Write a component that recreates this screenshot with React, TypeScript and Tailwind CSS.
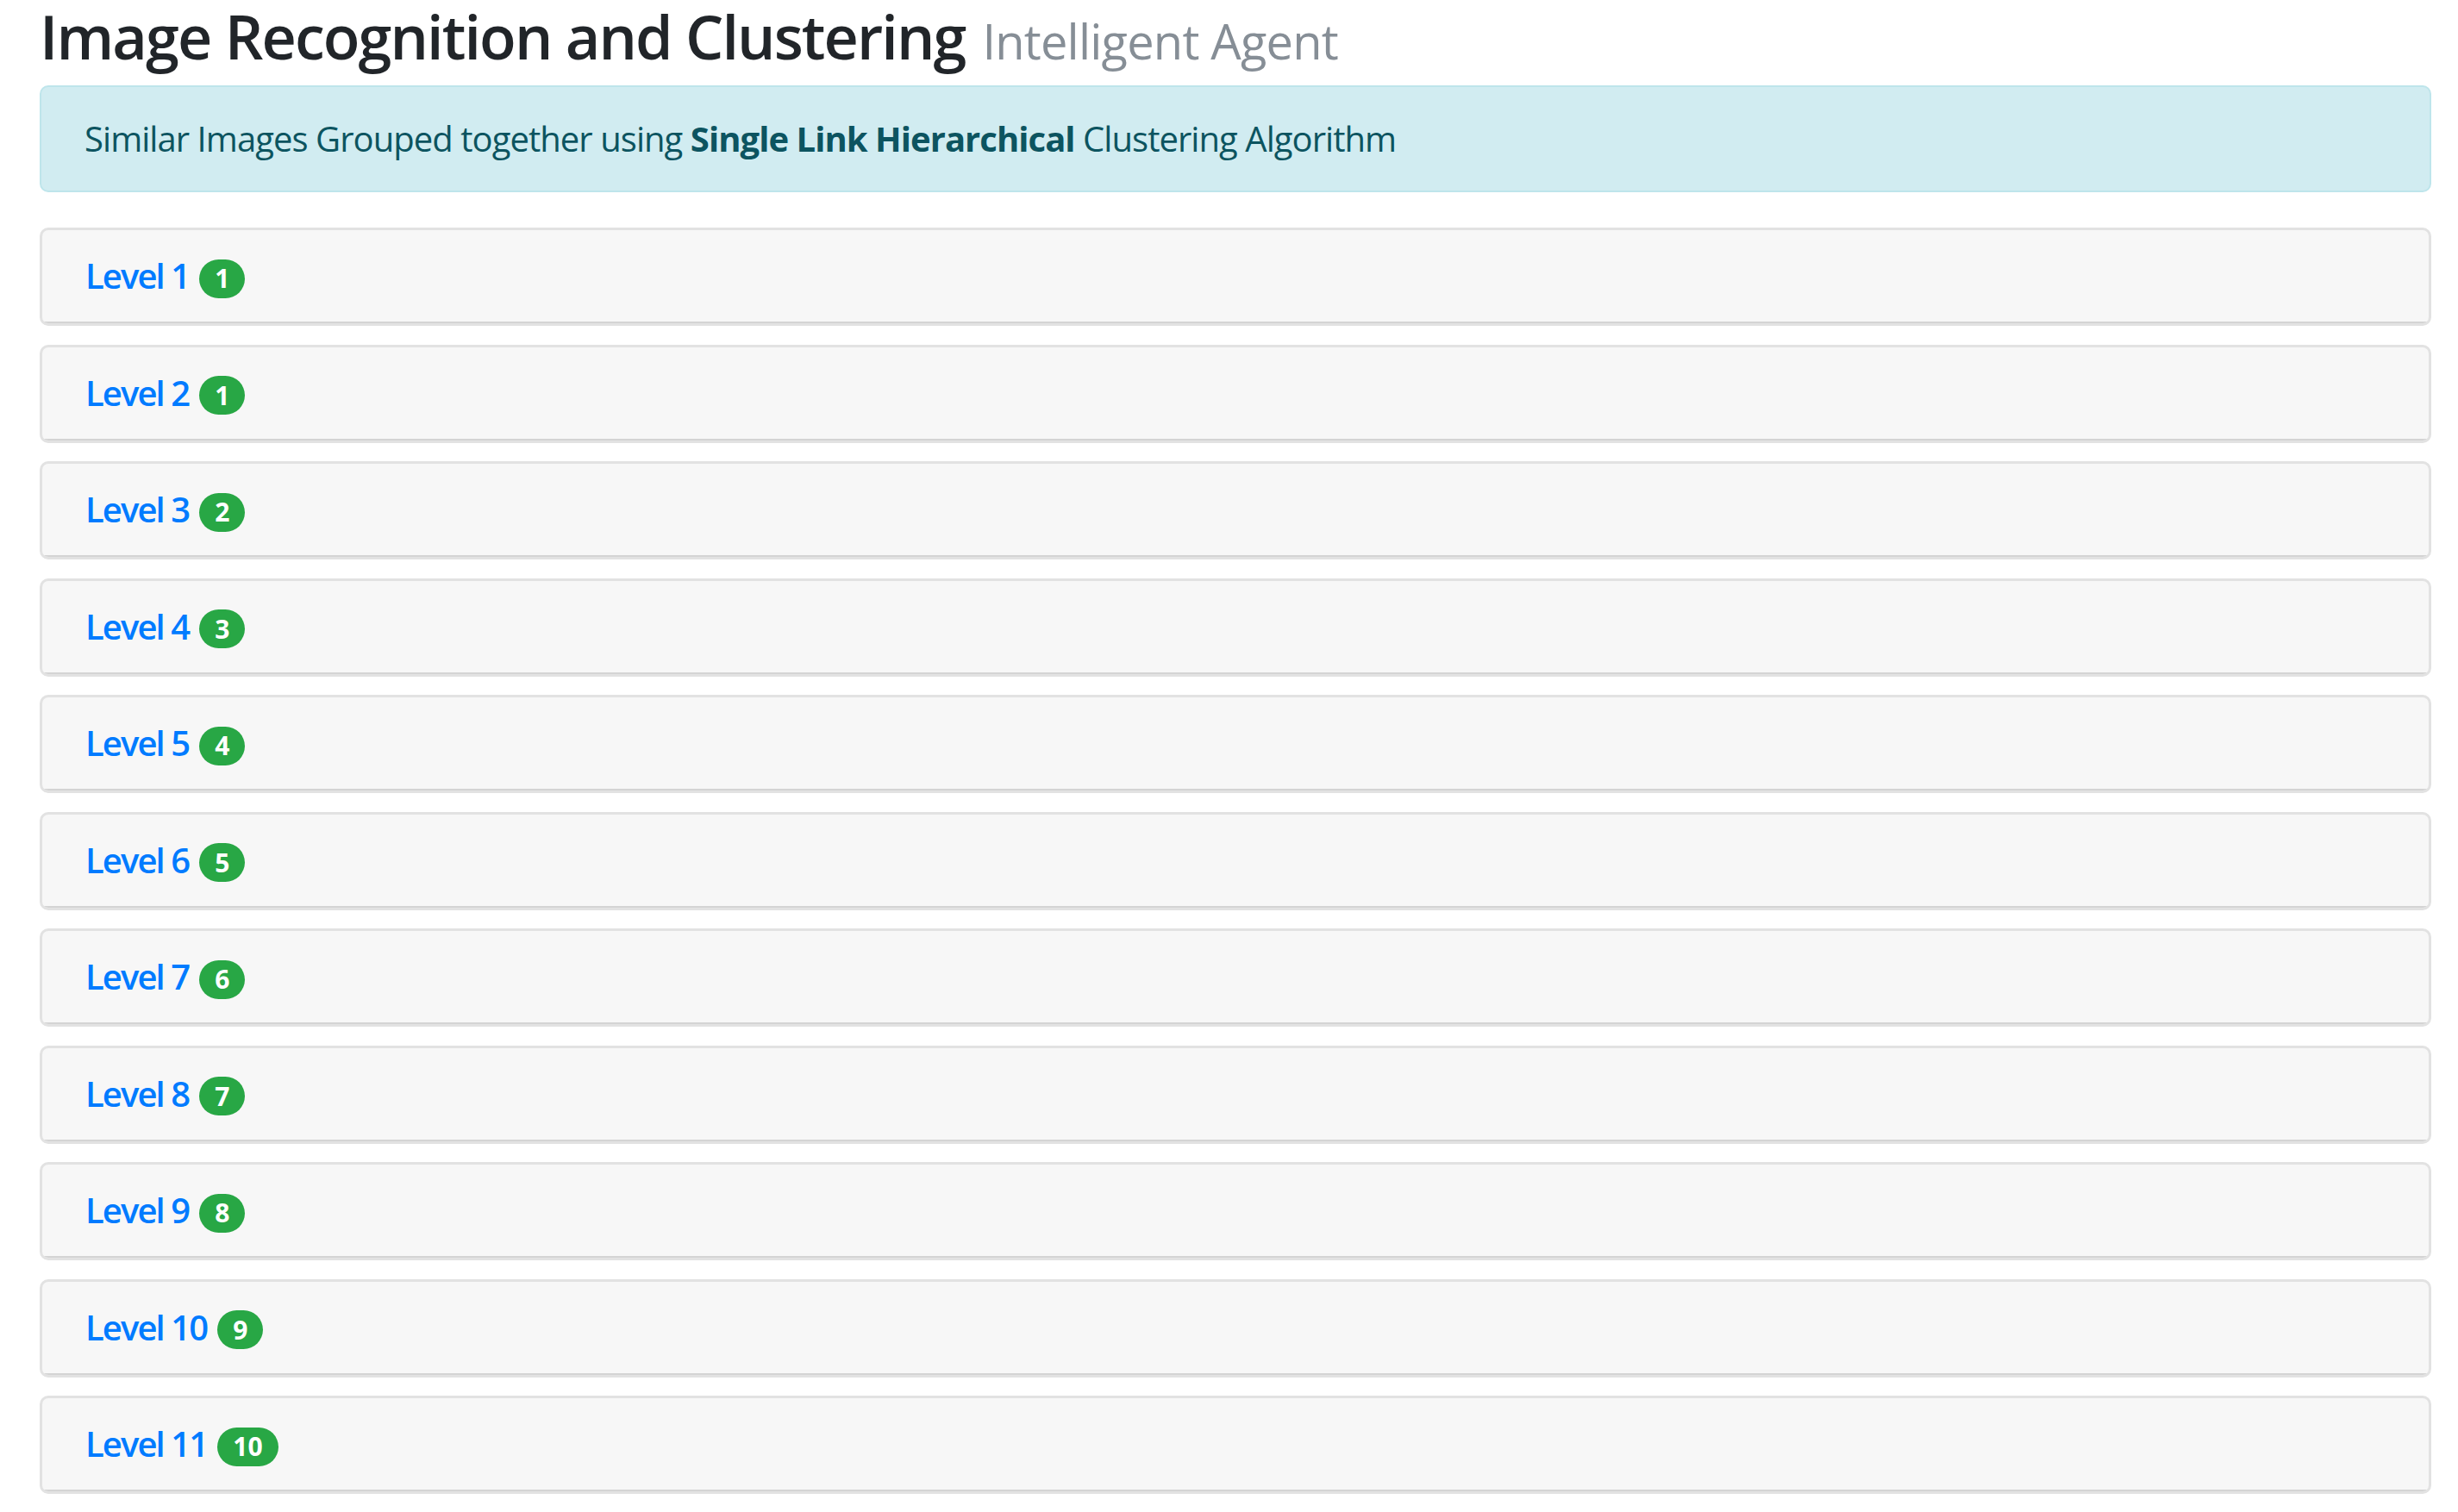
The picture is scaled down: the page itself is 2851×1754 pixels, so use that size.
const levels = [
	{ name: 'Level 1', count: 1 },
	{ name: 'Level 2', count: 1 },
	{ name: 'Level 3', count: 2 },
	{ name: 'Level 4', count: 3 },
	{ name: 'Level 5', count: 4 },
	{ name: 'Level 6', count: 5 },
	{ name: 'Level 7', count: 6 },
	{ name: 'Level 8', count: 7 },
	{ name: 'Level 9', count: 8 },
	{ name: 'Level 10', count: 9 },
	{ name: 'Level 11', count: 10 },
];

const LevelCard: React.FC<{ name: string; count: number }> = ({ name, count }) => (
	<div className="rounded-[10px] border-[3px] border-[#e2e2e2] bg-[#f7f7f7] overflow-hidden">
		<div className="h-[108px] flex items-center px-[50px] border-b-[2px] border-[#d4d4d4]">
			<a href="#" className="text-[#007bff] text-[40px] font-semibold tracking-[-1.9px] leading-[60px] no-underline">
				{name}
			</a>
			<span className="ml-[12px] mt-[6px] inline-flex items-center justify-center h-[45px] px-[18px] rounded-full bg-[#28a745] text-white text-[30px] font-bold leading-none">
				{count}
			</span>
		</div>
	</div>
);

const App: React.FC = () => {
	return (
		<div
			className="min-h-screen bg-white pl-[46px] pr-[31px]"
			style={{ fontFamily: '"Open Sans", "Noto Sans", sans-serif' }}>
			<h3 className="h-[84px] flex items-baseline gap-[20px] mb-[15px] whitespace-nowrap text-[#212529]">
				<span className="text-[70px] leading-[84px] font-semibold tracking-[-1.9px]">
					Image Recognition and Clustering
				</span>
				<small className="text-[56px] leading-[84px] font-normal tracking-[-0.8px] text-[#868e96]">
					Intelligent Agent
				</small>
			</h3>
			<div className="rounded-[10px] border-[2.5px] border-[#bee5eb] bg-[#d1ecf1] text-[#0c5460] px-[50px] py-[30px] text-[40px] leading-[60px] tracking-[-0.95px] mb-[41px]">
				Similar Images Grouped together using <b className="font-bold">Single Link Hierarchical</b> Clustering
				Algorithm
			</div>
			<div className="flex flex-col gap-[21.5px]">
				{levels.map(l => (
					<LevelCard key={l.name} name={l.name} count={l.count} />
				))}
			</div>
		</div>
	);
};

export default App;
